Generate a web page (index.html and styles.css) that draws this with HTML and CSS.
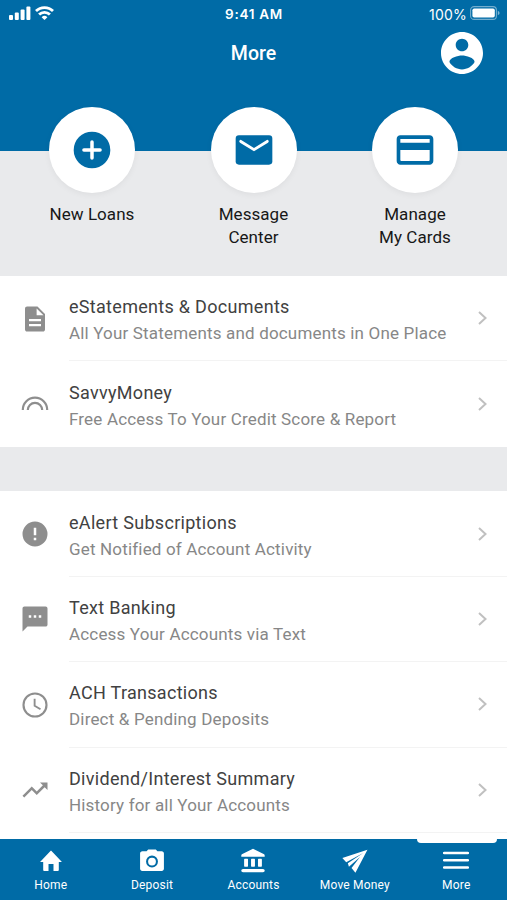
FILE: index.html
```
<!DOCTYPE html>
<html lang="en">
<head>
    <meta charset="UTF-8">
    <meta name="viewport" content="width=device-width, initial-scale=1.0">
    <title>More</title>
    <link rel="stylesheet" href="styles.css">
</head>
<body>
    <div class="app">
        <header class="header">
            <div class="status-bar">
                <div class="status-left">
                    <svg width="22" height="14" viewBox="0 0 22 14" fill="#fff"><rect x="0" y="9" width="4" height="5" rx="1"/><rect x="5.8" y="6.5" width="4" height="7.5" rx="1"/><rect x="11.6" y="3.5" width="4" height="10.5" rx="1"/><rect x="17.4" y="0.6" width="4" height="13.4" rx="1"/></svg>
                    <svg width="19" height="14" viewBox="0 0 19 14" fill="none" stroke="#fff" stroke-width="2.8"><path d="M1 5.1a12 12 0 0 1 17 0M4.1 8.600a7.6 7.6 0 0 1 10.800 0"/><path d="M6.6 11.200a4.100 4.100 0 0 1 5.800 0L9.500 14z" fill="#fff" stroke="none"/></svg>
                </div>
                <div class="status-time">9:41 AM</div>
                <div class="status-right">
                    <span>100%</span>
                    <svg width="31" height="14" viewBox="0 0 31 14"><rect x="0.6" y="0.6" width="25.8" height="12.8" rx="3.5" fill="none" stroke="#fff" stroke-opacity="0.45" stroke-width="1.1"/><rect x="2.4" y="2.4" width="22.4" height="9.2" rx="1.8" fill="#fff"/><path d="M27.8 4.7q1.8.7 1.8 2.3t-1.8 2.3z" fill="#fff" fill-opacity="0.5"/></svg>
                </div>
            </div>
            <div class="nav">
                <h1>More</h1>
                <svg class="profile" viewBox="2 2 20 20" fill="#fff"><path d="M12 2C6.48 2 2 6.48 2 12s4.48 10 10 10 10-4.48 10-10S17.52 2 12 2zm0 3.2c1.66 0 3 1.34 3 3s-1.34 3-3 3-3-1.34-3-3 1.34-3 3-3zm0 14.6c-2.5 0-4.71-1.3-6-3.5.03-1.99 4-3.1 6-3.1s5.97 1.11 6 3.1c-1.29 2.2-3.5 3.5-6 3.5z"/></svg>
            </div>
        </header>

        <section class="shortcuts">
            <a class="shortcut">
                <span class="circle"><svg width="44" height="44" viewBox="0 0 24 24"><circle cx="12" cy="12" r="10" fill="#006ba6"/><path d="M12 7.6v8.8M7.6 12h8.8" stroke="#fff" stroke-width="1.9" stroke-linecap="round"/></svg></span>
                <span>New Loans</span>
            </a>
            <a class="shortcut">
                <span class="circle"><svg width="44" height="44" viewBox="0 0 24 24"><rect x="2" y="4" width="20" height="16" rx="1.8" fill="#006ba6"/><path d="M4.8 7.3L12 11.8l7.2-4.5" fill="none" stroke="#fff" stroke-width="1.6" stroke-linecap="round"/></svg></span>
                <span>Message<br>Center</span>
            </a>
            <a class="shortcut">
                <span class="circle"><svg width="44" height="44" viewBox="0 0 24 24" fill="#006ba6"><path d="M20 4H4c-1.11 0-2 .89-2 2v12c0 1.11.89 2 2 2h16c1.11 0 2-.89 2-2V6c0-1.11-.89-2-2-2zm0 13.2c0 .6-.2.8-.8.8H4.8c-.6 0-.8-.2-.8-.8V12h16v5.200zm0-9.200H4V6h16v2z"/></svg></span>
                <span>Manage<br>My Cards</span>
            </a>
        </section>

        <ul class="list">
            <li class="row">
                <svg class="icon" viewBox="0 0 24 24"><path fill="#8e8e8e" d="M14 2H5.700C4.700 2 4 2.700 4 3.700v16.600c0 1 .7 1.700 1.700 1.700h12.600c1 0 1.700-.7 1.700-1.700V8l-6-6zm2.800 15.700H7.200V16h9.600v1.700zm0-4H7.200V12h9.600v1.700zM13.300 9V3.500L18.800 9h-5.500z"/></svg>
                <div class="row-body">
                    <div class="row-label"><div class="row-title">eStatements &amp; Documents</div><div class="row-text">All Your Statements and documents in One Place</div></div>
                    <svg class="chevron" viewBox="0 0 9 14"><path d="M1 1l6.500 6L1 13"/></svg>
                </div>
            </li>
            <li class="row">
                <svg class="icon" viewBox="0 0 30 30" fill="none" stroke="#8e8e8e" stroke-width="2.200"><path d="M2.800 21a12.200 12.300 0 0 1 24.400 0M7.800 21a7.200 7.200 0 0 1 14.400 0"/></svg>
                <div class="row-body">
                    <div class="row-label"><div class="row-title">SavvyMoney</div><div class="row-text">Free Access To Your Credit Score &amp; Report</div></div>
                    <svg class="chevron" viewBox="0 0 9 14"><path d="M1 1l6.500 6L1 13"/></svg>
                </div>
            </li>
        </ul>

        <ul class="list list-more">
            <li class="row">
                <svg class="icon" viewBox="0 0 24 24"><path fill="#8e8e8e" d="M12 2a10 10 0 1 0 0 20 10 10 0 0 0 0-20zm1 15h-2v-2h2v2zm0-4h-2V7h2v6z"/></svg>
                <div class="row-body">
                    <div class="row-label"><div class="row-title">eAlert Subscriptions</div><div class="row-text">Get Notified of Account Activity</div></div>
                    <svg class="chevron" viewBox="0 0 9 14"><path d="M1 1l6.500 6L1 13"/></svg>
                </div>
            </li>
            <li class="row">
                <svg class="icon" viewBox="0 0 24 24"><path fill="#8e8e8e" d="M20.500 2h-17C2.700 2 2 2.700 2 3.500V22l4-4h14.500c.8 0 1.500-.7 1.500-1.500v-13c0-.8-.7-1.500-1.500-1.500zM9 11H7V9h2v2zm4 0h-2V9h2v2zm4 0h-2V9h2v2z"/></svg>
                <div class="row-body">
                    <div class="row-label"><div class="row-title">Text Banking</div><div class="row-text">Access Your Accounts via Text</div></div>
                    <svg class="chevron" viewBox="0 0 9 14"><path d="M1 1l6.500 6L1 13"/></svg>
                </div>
            </li>
            <li class="row">
                <svg class="icon" viewBox="0 0 24 24" fill="none" stroke="#8e8e8e"><circle cx="12" cy="12" r="9.200" stroke-width="1.700"/><path d="M11.700 7v5.600l4.700 2.800" stroke-width="1.500"/></svg>
                <div class="row-body">
                    <div class="row-label"><div class="row-title">ACH Transactions</div><div class="row-text">Direct &amp; Pending Deposits</div></div>
                    <svg class="chevron" viewBox="0 0 9 14"><path d="M1 1l6.500 6L1 13"/></svg>
                </div>
            </li>
            <li class="row">
                <svg class="icon" viewBox="0 0 24 24"><path fill="#8e8e8e" d="M16 6l2.290 2.290-4.880 4.880-4-4L2 16.590 3.410 18l6-6 4 4 6.300-6.290L22 12V6z"/></svg>
                <div class="row-body">
                    <div class="row-label"><div class="row-title">Dividend/Interest Summary</div><div class="row-text">History for all Your Accounts</div></div>
                    <svg class="chevron" viewBox="0 0 9 14"><path d="M1 1l6.500 6L1 13"/></svg>
                </div>
            </li>
        </ul>

        <nav class="tabs">
            <a class="tab">
                <svg viewBox="0 0 24 24"><path d="M9.700 21.200v-6.400h4.600v6.400h4c.6 0 .9-.3.900-.9v-7.400h2.900L12.700 2.900c-.5-.4-.9-.4-1.400 0L1.900 12.900h2.900v7.400c0 .6.3.9.900.9z"/></svg>
                <span>Home</span>
            </a>
            <a class="tab">
                <svg viewBox="0 0 24 24"><path fill-rule="evenodd" d="M8.500 1.300L7 3H3.200C1.900 3 1 3.900 1 5v14.200c0 1.100.9 2 2 2h18c1.100 0 2-.9 2-2V5c0-1.100-.9-2-2-2h-4l-1.500-1.700h-7zM12 7a5.500 5.500 0 1 0 0 11 5.500 5.500 0 0 0 0-11zm0 1.900a3.600 3.600 0 1 1 0 7.200 3.600 3.600 0 0 1 0-7.200z"/></svg>
                <span>Deposit</span>
            </a>
            <a class="tab">
                <svg viewBox="0 0 24 24"><path d="M12 .6L2.200 5.600c-.8.4-1 .8-1 1.600v.9h21.600v-.9c0-.8-.2-1.200-1-1.600zM4.400 10h2.400c.4 0 .6.2.6.600v6.100c0 .4-.2.6-.6.600H4.400c-.4 0-.6-.2-.6-.600v-6.100c0-.4.2-.6.600-.600zM10.800 10h2.400c.4 0 .6.2.6.600v6.100c0 .4-.2.6-.6.600h-2.400c-.4 0-.6-.2-.6-.600v-6.100c0-.4.2-.6.600-.600zM17.200 10h2.400c.4 0 .6.2.6.600v6.100c0 .4-.2.6-.6.600h-2.400c-.4 0-.6-.2-.6-.600v-6.100c0-.4.2-.6.600-.600zM2.800 19.300h18.400c.9 0 1.600.7 1.600 1.500s-.7 1.600-1.600 1.600H2.800c-.9 0-1.600-.8-1.600-1.600s.7-1.500 1.600-1.500z"/></svg>
                <span>Accounts</span>
            </a>
            <a class="tab">
                <svg viewBox="0 0 24 24"><path d="M23.500 1.700L.3 9.300 3.900 13.200 19.600 4.500 5.400 14l1 3.300 10.200-9.100-7.800 10.300L12.400 22.800z"/></svg>
                <span>Move Money</span>
            </a>
            <a class="tab active">
                <svg viewBox="0 0 24 24"><path d="M1 4.600h22M1 11.300h22M1 18h22" stroke="#fff" stroke-width="2.400" stroke-linecap="round"/></svg>
                <span>More</span>
            </a>
        </nav>
    </div>
</body>
</html>
```
FILE: styles.css
```
* { box-sizing: border-box; }
body { margin: 0; font-family: Roboto, sans-serif; background: #e9eaec; }
svg { display: block; flex-shrink: 0; }
.app { height: 900px; display: flex; flex-direction: column; overflow: hidden; }

.header { height: 151px; flex-shrink: 0; background: #006ba6; color: #fff; }
.status-bar { display: grid; grid-template-columns: 1fr auto 1fr; align-items: center; height: 26px; padding: 0 6px 0 9px; font-family: Inter, sans-serif; font-size: 14px; }
.status-left { display: flex; gap: 4px; }
.status-time { font-weight: 600; font-size: 13.5px; letter-spacing: 0.7px; margin-left: -2px; padding-top: 2px; }
.status-right { display: flex; justify-content: flex-end; align-items: center; gap: 3px; }
.status-right span { padding-top: 2px; letter-spacing: 0.2px; }
.nav { display: grid; grid-template-columns: 1fr auto 1fr; align-items: center; height: 54px; padding-right: 24px; padding-left: 24px; }
.nav h1 { grid-column: 2; margin: 0; font-size: 19.5px; font-weight: 500; }
.profile { width: 42px; height: 42px; justify-self: end; }

.shortcuts { display: grid; grid-template-columns: repeat(3, 161.5px); justify-content: center; height: 125px; flex-shrink: 0; }
.shortcut { display: flex; flex-direction: column; align-items: center; gap: 10px; margin-top: -44px; font-size: 17px; line-height: 22.5px; letter-spacing: 0.05px; text-align: center; color: #171717; }
.circle { display: flex; align-items: center; justify-content: center; width: 86px; height: 86px; border-radius: 50%; background: #fff; box-shadow: 0 2px 6px rgba(0, 0, 0, 0.05); }

.list { flex-shrink: 0; margin: 0; padding: 0; list-style: none; background: #fff; }
.list-more { flex: 1 0 0; min-height: 0; margin-top: 44.6px; }
.row { display: flex; align-items: center; height: 85.4px; padding-left: 20px; }
.icon { width: 30px; height: 30px; }
.row-body { display: flex; flex: 1; align-items: center; justify-content: space-between; height: 100%; margin-left: 19px; padding-right: 20px; border-bottom: 1px solid #f3f3f3; }
.list:not(.list-more) .row:last-child .row-body { border-bottom: 0; }
.row-label { padding-top: 4px; }
.row-title { font-size: 18px; line-height: 26px; letter-spacing: 0.3px; color: #414141; }
.row-text { font-size: 17px; line-height: 26px; letter-spacing: 0.17px; color: #878787; }
.chevron { width: 9px; height: 14px; fill: none; stroke: #c0c0c0; stroke-width: 2; }

.tabs { display: grid; grid-template-columns: repeat(5, 1fr); height: 61px; flex-shrink: 0; background: #006ba6; color: #fff; }
.tab { position: relative; display: flex; flex-direction: column; align-items: center; padding-top: 9px; font-size: 12px; line-height: 16px; letter-spacing: 0.2px; }
.tab svg { height: 26px; margin-bottom: 3px; fill: #fff; }
.tab.active::before { content: ""; position: absolute; top: -1px; left: 11px; width: 80px; height: 5px; border-radius: 0 0 4px 4px; background: #fff; }
```
